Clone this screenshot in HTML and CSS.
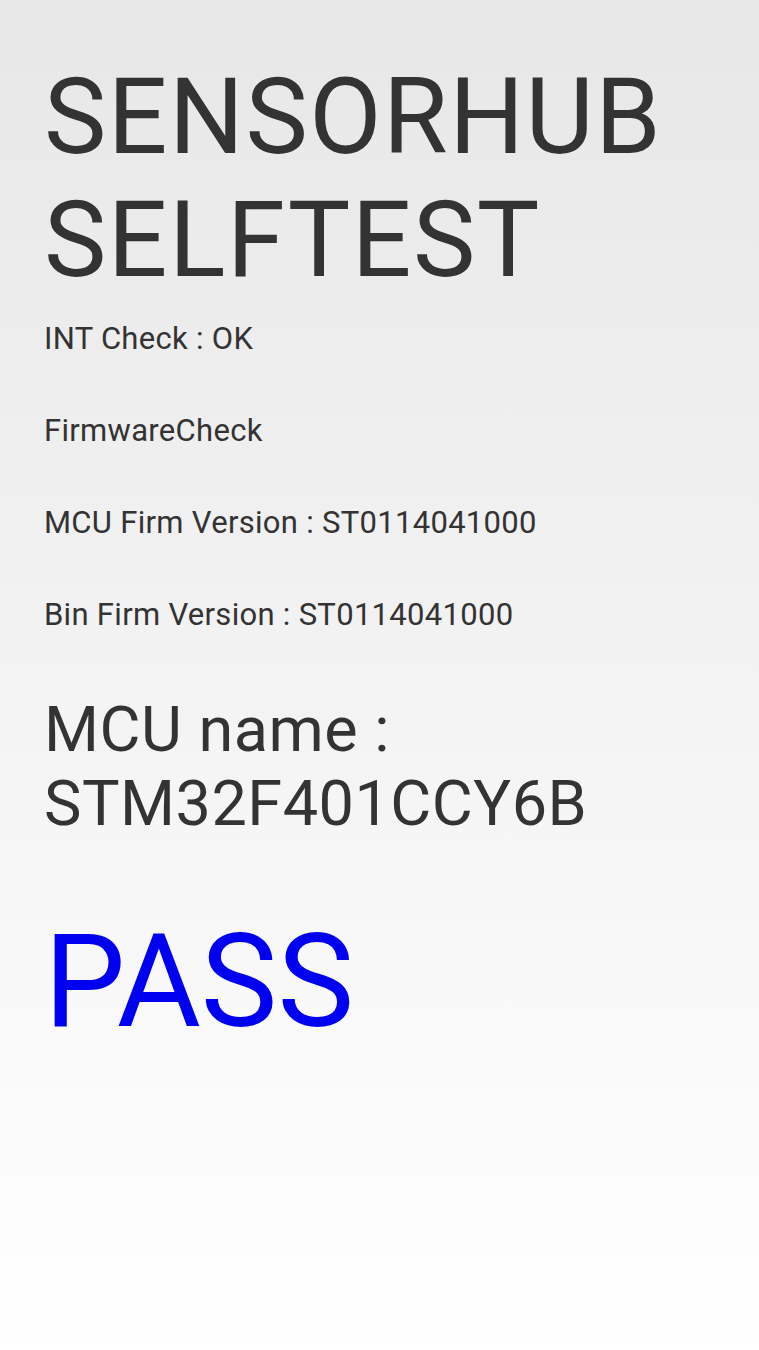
FILE: index.html
```html
<!DOCTYPE html>
<html>
<head>
<meta charset="utf-8">
<link rel="stylesheet" href="styles.css">
</head>
<body>
<main class="screen">
  <h1 class="title">SENSORHUB<br>SELFTEST</h1>
  <ul class="checks">
    <li>INT Check : OK</li>
    <li>FirmwareCheck</li>
    <li>MCU Firm Version : ST0114041000</li>
    <li>Bin Firm Version : ST0114041000</li>
  </ul>
  <p class="mcu">MCU name :<br>STM32F401CCY6B</p>
  <p class="result">PASS</p>
</main>
</body>
</html>
```
FILE: styles.css
```css
html, body {
  margin: 0;
  padding: 0;
}
body {
  width: 759px;
  height: 1350px;
  background: linear-gradient(to bottom, #e7e7e7 0%, #f3f3f3 50%, #ffffff 100%);
  font-family: Roboto, "Noto Sans", sans-serif;
  color: #333333;
  overflow: hidden;
}
.screen {
  display: flex;
  flex-direction: column;
  padding: 56px 0 0 44px;
}
.title {
  margin: 0;
  font-size: 105px;
  font-weight: 400;
  line-height: 123px;
  letter-spacing: 1.5px;
}
.checks {
  list-style: none;
  margin: 19px 0 0;
  padding: 0;
  display: flex;
  flex-direction: column;
  gap: 56px;
}
.checks li {
  font-size: 31px;
  line-height: 36px;
  letter-spacing: 0.3px;
}
.mcu {
  margin: 60px 0 0;
  font-size: 63px;
  line-height: 74px;
  letter-spacing: 0.5px;
}
.result {
  margin: 65px 0 0;
  font-size: 129px;
  line-height: 151px;
  color: #0000f0;
}
```
